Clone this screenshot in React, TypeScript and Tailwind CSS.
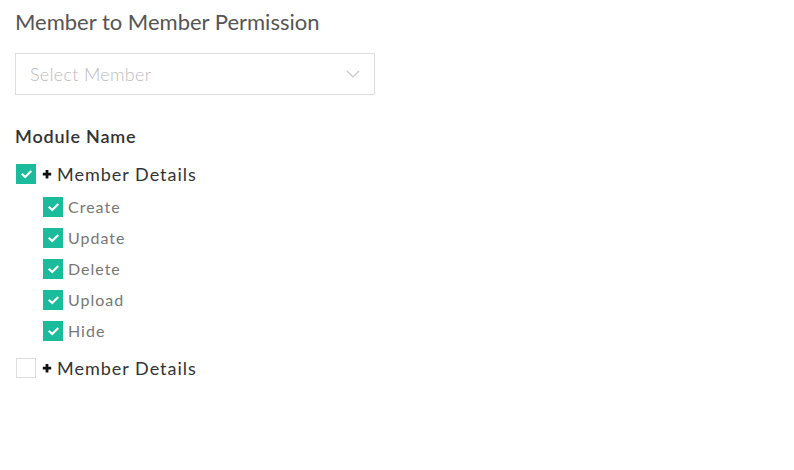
import React from "react";

const Check = ({ checked }: { checked: boolean }) =>
  checked ? (
    <span className="flex h-[20px] w-[20px] shrink-0 items-center justify-center bg-[#1abc9c]">
      <svg width="11" height="9" viewBox="0 0 11 9" fill="none">
        <path d="M1.5 4.5 L4.2 7 L9.5 1.8" stroke="white" strokeWidth="2.2" strokeLinecap="square" />
      </svg>
    </span>
  ) : (
    <span className="block h-[20px] w-[20px] shrink-0 border border-[#dddddd] bg-white" />
  );

const Plus = () => (
  <svg width="10" height="10" viewBox="0 0 10 10" className="block shrink-0">
    <path d="M5 1 V9.5 M0.8 5.2 H9.2" stroke="#111" strokeWidth="2.8" />
  </svg>
);

export default function App() {
  const subs = ["Create", "Update", "Delete", "Upload", "Hide"];
  return (
    <div className="h-[470px] w-[794px] bg-white pl-[15px] pt-[9px]" style={{ fontFamily: "Lato, 'Open Sans', sans-serif" }}>
      <h1 className="text-[22px] leading-[26px] text-[#555555]">Member to Member Permission</h1>
      <div className="mt-[18px] flex h-[42px] w-[360px] items-center justify-between border border-[#dddddd] pl-[14px] pr-[14px]">
        <span className="text-[18px] font-light tracking-[0.3px] text-[#bbbbbb]">Select Member</span>
        <svg width="14" height="8" viewBox="0 0 14 8" fill="none">
          <path d="M1 1 L7 7 L13 1" stroke="#c8c8c8" strokeWidth="1.2" />
        </svg>
      </div>
      <div className="mt-[30px] text-[18px] font-semibold leading-[22px] tracking-[0.8px] text-[#333333]">Module Name</div>
      <div className="mt-[17px] flex h-[20px] items-center pl-[1px]">
        <Check checked />
        <span className="ml-[6px]"><Plus /></span>
        <span className="ml-[5px] text-[18px] tracking-[1px] text-[#333333]">Member Details</span>
      </div>
      <div className="mt-[13px] flex flex-col gap-[11px] pl-[28px]">
        {subs.map((s) => (
          <div key={s} className="flex h-[20px] items-center">
            <Check checked />
            <span className="ml-[5px] text-[16px] tracking-[1px] text-[#777777]">{s}</span>
          </div>
        ))}
      </div>
      <div className="mt-[17px] flex h-[20px] items-center pl-[1px]">
        <Check checked={false} />
        <span className="ml-[6px]"><Plus /></span>
        <span className="ml-[5px] text-[18px] tracking-[1px] text-[#333333]">Member Details</span>
      </div>
    </div>
  );
}
